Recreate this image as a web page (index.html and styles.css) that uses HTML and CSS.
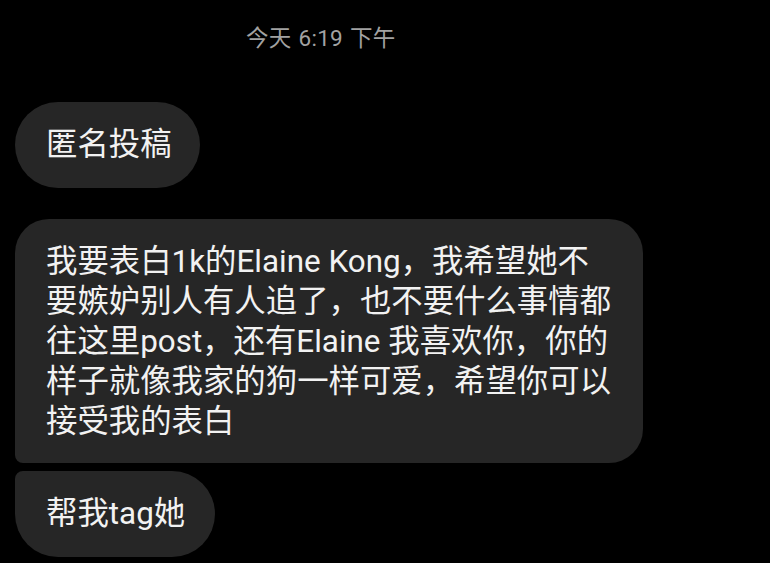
FILE: index.html
```html
<!DOCTYPE html>
<html lang="zh-CN">
<head>
<meta charset="utf-8">
<title>Chat</title>
<link rel="stylesheet" href="styles.css">
</head>
<body>
<main class="thread">
  <div class="time">今天 6:19 下午</div>
  <div class="msg msg-single">匿名投稿</div>
  <div class="group">
    <div class="msg msg-first">我要表白1k的Elaine Kong，我希望她不<br>要嫉妒别人有人追了，也不要什么事情都<br>往这里post，还有Elaine 我喜欢你，你的<br>样子就像我家的狗一样可爱，希望你可以<br>接受我的表白</div>
    <div class="msg msg-last">帮我tag她</div>
  </div>
</main>
</body>
</html>
```
FILE: styles.css
```css
html, body {
  margin: 0;
  padding: 0;
  background: #000;
}
body {
  width: 770px;
  height: 563px;
  overflow: hidden;
  font-family: Roboto, "Noto Sans CJK SC", sans-serif;
}
.thread {
  display: flex;
  flex-direction: column;
  align-items: flex-start;
  padding: 0 0 0 15px;
}
.time {
  margin: 23px 0 0 231px;
  font-size: 22.5px;
  line-height: 30px;
  letter-spacing: 0.3px;
  word-spacing: 1px;
  color: #a2a2a2;
}
.msg {
  background: #262626;
  color: #f2f2f2;
  font-size: 31.4px;
  line-height: 40px;
  box-sizing: border-box;
}
.msg-single {
  margin-top: 49px;
  height: 86px;
  padding: 23px 28px 23px 31px;
  border-radius: 43px;
}
.group {
  display: flex;
  flex-direction: column;
  align-items: flex-start;
  gap: 8px;
  margin-top: 31px;
}
.msg-first {
  width: 628px;
  padding: 23px 20px 21px 31px;
  border-radius: 34px 34px 34px 8px;
}
.msg-last {
  height: 86px;
  padding: 23px 30px 23px 31px;
  border-radius: 8px 43px 43px 43px;
}
```
